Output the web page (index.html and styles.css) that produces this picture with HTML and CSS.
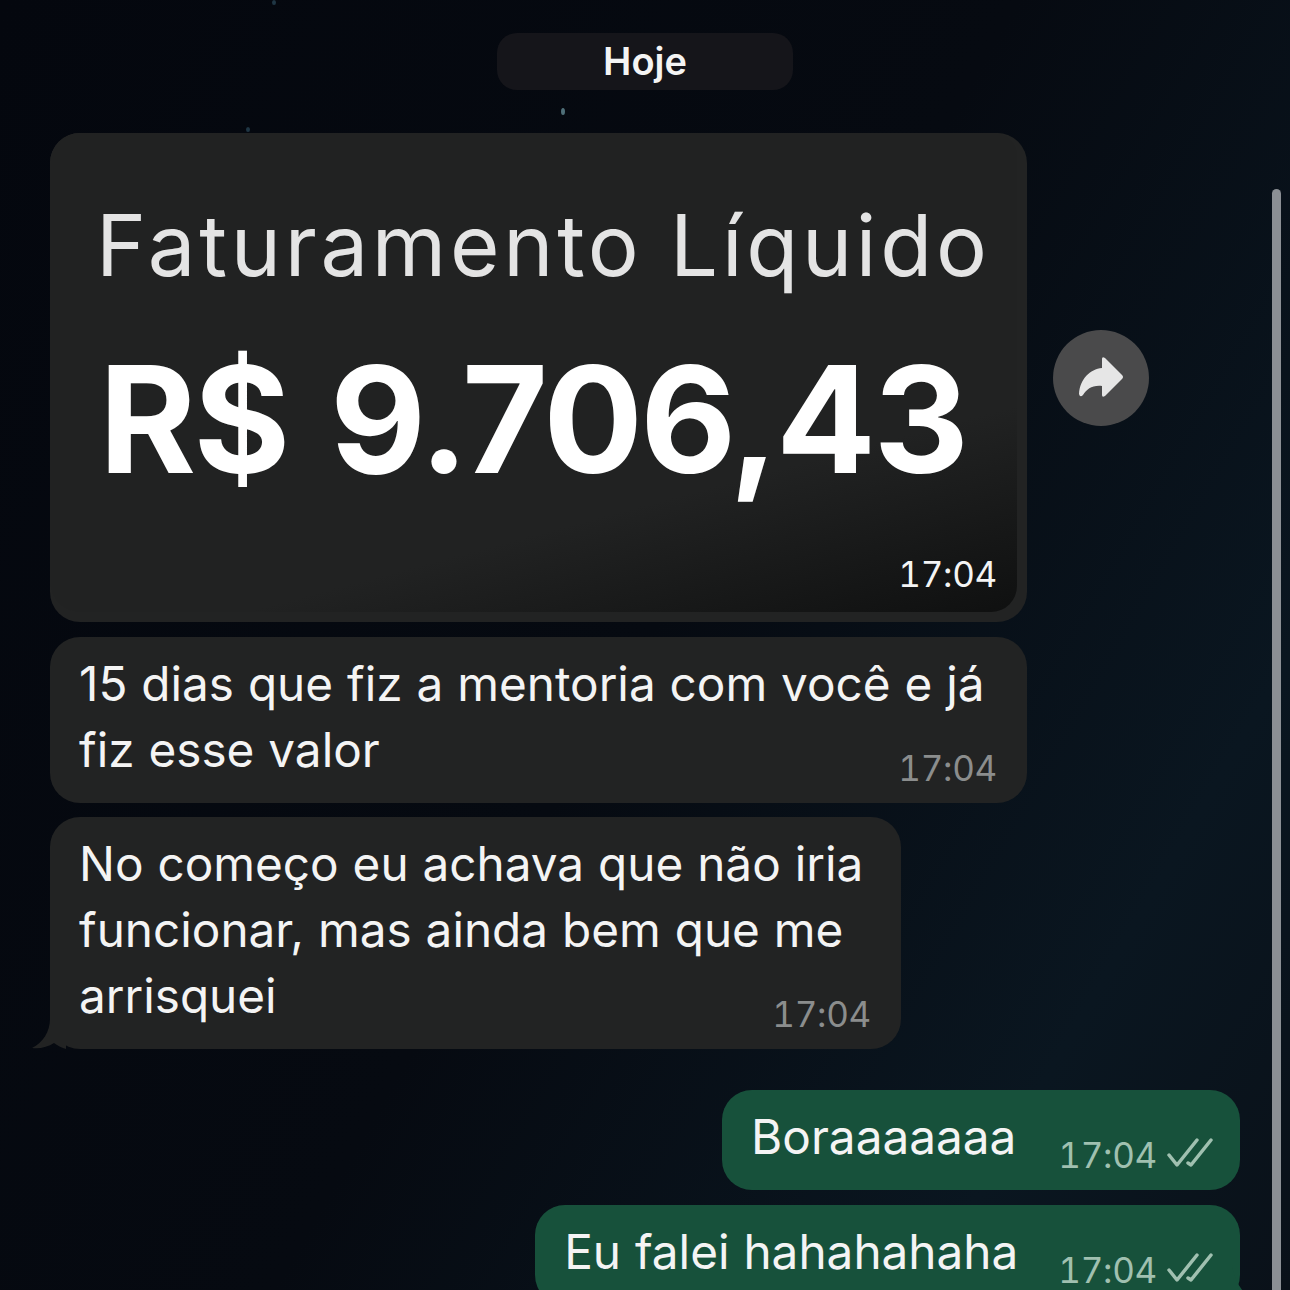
FILE: index.html
```html
<!DOCTYPE html>
<html lang="pt-BR">
<head>
  <meta charset="UTF-8">
  <meta name="viewport" content="width=device-width, initial-scale=1.0">
  <title>Conversa</title>
  <link rel="stylesheet" href="styles.css">
</head>
<body>
  <main class="chat">
    <!-- fundo -->
    <span class="star star-a"></span>
    <span class="star star-b"></span>
    <span class="star star-c"></span>
    <div class="scrollbar"></div>

    <div class="date-row">
      <div class="date-pill">Hoje</div>
    </div>

    <!-- Mensagens recebidas -->
    <div class="row-in">
      <div class="bubble-image">
        <div class="picture">
          <p class="picture-title">Faturamento Líquido</p>
          <p class="picture-value">R$ 9.706,43</p>
          <span class="picture-time">17:04</span>
        </div>
      </div>
      <button class="forward" aria-label="Encaminhar">
        <svg width="48" height="48" viewBox="0 0 48 48">
          <path d="M25 5q0-3 3-1L45 21q2 2 0 4L28 42q-3 2-3-1V32C15 31 10 35 6 41q-3 3-4-1C3 25 13 15 25 14Z" fill="#e6e6e6"/>
        </svg>
      </button>
    </div>

    <div class="bubble bubble-in bubble-wide">
      <p class="text">15 dias que fiz a mentoria com você e já<br>fiz esse valor</p>
      <span class="time">17:04</span>
    </div>

    <div class="bubble bubble-in bubble-mid">
      <p class="text">No começo eu achava que não iria<br>funcionar, mas ainda bem que me<br>arrisquei</p>
      <span class="time">17:04</span>
      <svg class="tail-in" width="34" height="30" viewBox="0 0 34 30">
        <path d="M18 0C18 12 11 24 0 29C8 30 16 28 22 24C26 27 30 29 34 30V0Z" fill="#222323"/>
      </svg>
    </div>

    <!-- Mensagens enviadas -->
    <div class="bubble-out first-out">
      <p class="text">Boraaaaaaa</p>
      <span class="time-out">17:04</span>
      <svg class="checks" width="46" height="30" viewBox="0 0 46 30">
        <path d="M2 17L10 27L30 2M21 25L24 27L44 2" fill="none" stroke="#a0c0b0" stroke-width="3.5" stroke-linecap="round" stroke-linejoin="round"/>
      </svg>
    </div>

    <div class="bubble-out last-out">
      <p class="text">Eu falei hahahahaha</p>
      <span class="time-out">17:04</span>
      <svg class="checks" width="46" height="30" viewBox="0 0 46 30">
        <path d="M2 17L10 27L30 2M21 25L24 27L44 2" fill="none" stroke="#a0c0b0" stroke-width="3.5" stroke-linecap="round" stroke-linejoin="round"/>
      </svg>
      <svg class="tail-out" width="26" height="40" viewBox="0 0 26 40">
        <path d="M0 0C2 14 10 30 26 40H0Z" fill="#17513b"/>
      </svg>
    </div>
  </main>
</body>
</html>
```

FILE: styles.css
```css
* {
  margin: 0;
  padding: 0;
  box-sizing: border-box;
}

html, body {
  height: 1290px;
  overflow: hidden;
}

body {
  font-family: Inter, "Liberation Sans", sans-serif;
  background: linear-gradient(120deg, #04070e 0%, #060a11 50%, #0a1620 82%, #0a1119 100%);
  color: #f4f4f4;
}

.chat {
  position: relative;
  height: 1290px;
  padding: 33px 50px 0;
  display: flex;
  flex-direction: column;
}

.chat > * {
  flex-shrink: 0;
}

.star {
  position: absolute;
  width: 4px;
  height: 7px;
  border-radius: 50%;
  background: #4f6f78;
}

.star-a { left: 561px; top: 108px; }
.star-b { left: 272px; top: 0; height: 5px; background: #1f3644; }
.star-c { left: 246px; top: 127px; height: 5px; background: #1f3644; }

.scrollbar {
  position: absolute;
  left: 1272px;
  top: 189px;
  width: 9px;
  height: 1110px;
  border-radius: 5px;
  background: #8b8f94;
}

.date-row {
  display: flex;
  justify-content: center;
  margin-bottom: 43px;
}

.date-pill {
  width: 296px;
  height: 57px;
  border-radius: 20px;
  background: #15151a;
  font-size: 38px;
  font-weight: 600;
  line-height: 57px;
  text-align: center;
}

.row-in {
  display: flex;
  align-items: center;
  gap: 26px;
  margin-bottom: 15px;
}

.bubble-image {
  width: 977px;
  height: 489px;
  padding: 0 10px 10px 0;
  border-radius: 30px;
  background: #222323;
}

.picture {
  position: relative;
  height: 100%;
  padding: 62px 0 0 46px;
  border-radius: 30px 22px 26px 30px;
  background: linear-gradient(165deg, #212222 72%, #0f1010 100%);
}

.picture-title {
  font-size: 85px;
  font-weight: 400;
  line-height: 102px;
  letter-spacing: 3.7px;
  color: #e4e4e4;
  white-space: nowrap;
}

.picture-value {
  margin: 37px 0 0 3px;
  font-size: 148px;
  font-weight: 700;
  line-height: 172px;
  letter-spacing: -2.7px;
  word-spacing: 10px;
  color: #fff;
  white-space: nowrap;
}

.picture-time {
  position: absolute;
  right: 20px;
  bottom: 16px;
  font-size: 35px;
  line-height: 44px;
  letter-spacing: -0.3px;
  font-variant-numeric: tabular-nums;
  color: #f4f4f4;
}

.forward {
  width: 96px;
  height: 96px;
  border: none;
  border-radius: 50%;
  background: #4a4a4b;
  display: flex;
  align-items: center;
  justify-content: center;
}

.bubble {
  display: grid;
  padding: 14px 30px 13px 29px;
  border-radius: 30px;
}

.bubble > .text,
.bubble > .time {
  grid-area: 1 / 1;
}

.text {
  font-size: 47.7px;
  line-height: 66px;
  word-spacing: 0.5px;
  white-space: nowrap;
}

.time {
  justify-self: end;
  align-self: end;
  font-size: 35px;
  line-height: 44px;
  letter-spacing: -0.3px;
  font-variant-numeric: tabular-nums;
  color: #8b8d8d;
}

.bubble-in {
  position: relative;
  background: #222323;
}

.bubble-wide {
  width: 977px;
  height: 166px;
  margin-bottom: 14px;
}

.bubble-mid {
  width: 851px;
  height: 232px;
  margin-bottom: 41px;
}

.tail-in {
  position: absolute;
  left: -18px;
  bottom: 0;
}

.bubble-out {
  position: relative;
  align-self: flex-end;
  display: flex;
  align-items: flex-start;
  height: 100px;
  padding: 14px 27px 0 29px;
  border-radius: 30px;
  background: #17513b;
}

.first-out {
  margin-bottom: 15px;
}

.time-out {
  margin: 29px 0 0 42px;
  font-size: 35px;
  line-height: 44px;
  letter-spacing: -0.3px;
  font-variant-numeric: tabular-nums;
  color: #a0c0b0;
}

.last-out .time-out {
  margin-left: 40px;
}

.checks {
  margin: 34px 0 0 10px;
}

.tail-out {
  position: absolute;
  right: -18px;
  bottom: 0;
}
```
